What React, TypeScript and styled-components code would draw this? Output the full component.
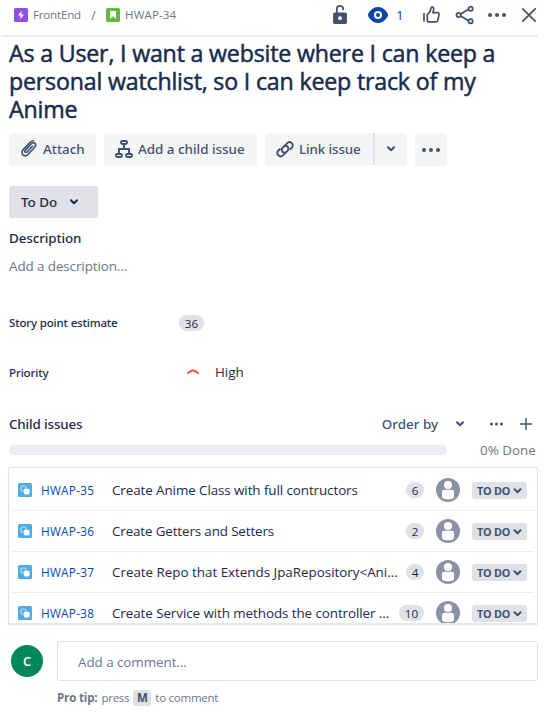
import React from 'react';
import styled, { createGlobalStyle } from 'styled-components';

const Global = createGlobalStyle`
  * { box-sizing: border-box; }
  body { margin: 0; background: #fff; }
`;

const ink = '#172b4d';
const slate = '#42526e';
const muted = '#6b778c';
const line = '#dfe1e6';

/* One run of text: size, colour, tracking and weight vary by use. */
const Text = styled.span<{ $size?: number; $color?: string; $track?: number; $shift?: number }>`
  display: block;
  white-space: pre;
  font-size: ${p => p.$size ?? 13.4}px;
  line-height: 20px;
  color: ${p => p.$color ?? ink};
  letter-spacing: ${p => p.$track ?? 0}px;
  transform: translateY(${p => p.$shift ?? 0}px);
`;

const Label = styled(Text)`
  font-family: 'Noto Sans', sans-serif;
  font-weight: 500;
`;

const Panel = styled.main`
  width: 538px;
  height: 713px;
  font-family: 'Open Sans', 'Noto Sans', sans-serif;
  display: flex;
  flex-direction: column;
  overflow: hidden;
`;

const TopBar = styled.header`
  height: 37px;
  flex: none;
  margin-left: 1px;
  padding: 0 2px 6px 13px;
  border-bottom: 2px solid #ebecf0;
  display: flex;
  align-items: center;
  justify-content: space-between;
`;

const Crumbs = styled.nav`
  display: flex;
  align-items: center;
  padding-top: 1px;
`;

const Crumb = styled.div`
  display: flex;
  align-items: center;
  gap: 5px;
`;

const Slash = styled.span`
  width: 25px;
  text-align: center;
  font-size: 13px;
  line-height: 20px;
  color: ${muted};
`;

const TopActions = styled.div`
  display: flex;
  align-items: center;
  height: 30px;
  svg { display: block; }
`;

const Watch = styled.div`
  display: flex;
  align-items: center;
  gap: 8px;
  width: 36px;
  margin: 0 19px 0 21px;
`;

const Share = styled.div`
  margin: 0 13px 0 15px;
`;

const Close = styled.div`
  margin-left: 16px;
`;

const Title = styled.h1`
  margin: 2px 0 0 9px;
  height: 84px;
  font-size: 23.2px;
  font-weight: 400;
  line-height: 28px;
  letter-spacing: -0.19px;
  color: ${ink};
  white-space: pre;
  -webkit-text-stroke: 0.5px currentColor;
`;

const ButtonRow = styled.div`
  display: flex;
  gap: 8px;
  margin: 10px 0 0 9px;
  height: 33px;
`;

const Button = styled.button<{ $width: number }>`
  width: ${p => p.$width}px;
  height: 32px;
  border: 0;
  border-radius: 3px;
  background: #f4f5f7;
  padding: 0 0 0 11px;
  display: flex;
  align-items: center;
  gap: 5px;
  font-family: inherit;
  svg { flex: none; }
`;

const Split = styled.div`
  display: flex;
`;

const LinkButton = styled(Button)`
  border-radius: 3px 0 0 3px;
`;

const DropButton = styled(Button)`
  border-left: 2px solid ${line};
  border-radius: 0 3px 3px 0;
  padding: 0;
  justify-content: center;
`;

const MoreButton = styled(Button)`
  height: 33px;
  padding: 0;
  justify-content: center;
`;

const StatusButton = styled.button`
  width: 89px;
  height: 32px;
  flex: none;
  margin: 20px 0 0 9px;
  border: 0;
  border-radius: 3px;
  background: ${line};
  padding: 0 20px 0 12px;
  display: flex;
  align-items: center;
  justify-content: space-between;
  font-family: inherit;
`;

const Description = styled.section`
  margin: 10px 0 0 9px;
  display: flex;
  flex-direction: column;
  gap: 8px;
`;

const Field = styled.div<{ $top: number }>`
  margin: ${p => p.$top}px 0 0 9px;
  height: 20px;
  display: grid;
  grid-template-columns: 170px 1fr;
  align-items: center;
`;

const PriorityValue = styled.div`
  display: flex;
  align-items: center;
  gap: 16px;
  padding-left: 8px;
`;

const Count = styled.span<{ $width: number }>`
  width: ${p => p.$width}px;
  height: 16px;
  flex: none;
  border-radius: 8px;
  background: ${line};
  color: ${ink};
  font-size: 11.6px;
  line-height: 17px;
  text-align: center;
`;

const ChildHeader = styled.div`
  margin: 32px 6px 0 9px;
  height: 20px;
  display: flex;
  align-items: center;
  justify-content: space-between;
`;

const ChildActions = styled.div`
  display: flex;
  align-items: center;
`;

const OrderBy = styled.div`
  display: flex;
  align-items: center;
  gap: 18px;
  margin-right: 26px;
`;

const Add = styled.div`
  margin-left: 17px;
  display: flex;
`;

const Progress = styled.div`
  margin: 6px 0 0 9px;
  height: 20px;
  display: flex;
  align-items: center;
  gap: 33px;
`;

const Track = styled.div`
  width: 438px;
  height: 10px;
  border-radius: 5px;
  background: #ebecf0;
`;

const IssueList = styled.div`
  margin: 7px 0 0 8px;
  height: 158px;
  flex: none;
  overflow: hidden;
  border: 1px solid ${line};
  border-bottom: 2px solid #e6e8ec;
  border-radius: 3px 3px 0 0;
  box-shadow: 0 0 1px #dfe1e6;
  padding: 2px 3px 0;
`;

const Issue = styled.div`
  height: 41px;
  border-bottom: 1px solid #ebecf0;
  padding: 0 7px 0 6px;
  display: grid;
  grid-template-columns: 23px 71px 1fr auto 24px 67px;
  align-items: center;
  svg { display: block; }
`;

const CountCell = styled.div`
  padding-right: 12px;
  display: flex;
`;

const Lozenge = styled.div`
  margin-left: 12px;
  width: 55px;
  height: 17px;
  border-radius: 3px;
  background: ${line};
  padding: 0 5px;
  display: flex;
  align-items: center;
  justify-content: space-between;
  font-size: 10.8px;
  font-weight: 700;
  line-height: 17px;
  letter-spacing: -0.2px;
  color: ${slate};
  white-space: nowrap;
  svg { margin-top: 2px; }
`;

const CommentBar = styled.section`
  margin: 16px 0 0 11px;
  display: grid;
  grid-template-columns: 46px 1fr;
`;

const UserBadge = styled.div`
  margin-top: 4px;
  width: 32px;
  height: 32px;
  border-radius: 50%;
  background: #00875a;
  color: #fff;
  font-size: 13px;
  font-weight: 600;
  line-height: 32px;
  text-align: center;
`;

const CommentBox = styled.div`
  height: 40px;
  border: 1px solid ${line};
  border-radius: 3px;
  padding: 10px 20px;
`;

const Tip = styled.div`
  grid-column: 2;
  margin-top: 7px;
  height: 20px;
  display: flex;
  align-items: center;
  gap: 4px;
  color: ${muted};
  font-size: 11.5px;
  line-height: 20px;
  letter-spacing: -0.25px;
  white-space: nowrap;
  b { letter-spacing: -0.15px; }
`;

const Key = styled.kbd`
  width: 18px;
  height: 16px;
  border-radius: 3px;
  background: ${line};
  color: ${slate};
  font: 700 11.5px/16px 'Open Sans', sans-serif;
  text-align: center;
`;

const Chevron = ({ color = slate, width = 8 }: { color?: string; width?: number }) => (
  <svg width={width} height="6" viewBox="0 0 8 6" fill="none">
    <path d="M1 1.2 4 4.2 7 1.2" stroke={color} strokeWidth="2" strokeLinecap="round" strokeLinejoin="round" />
  </svg>
);

const Dots = ({ width, r }: { width: number; r: number }) => (
  <svg width={width} height="6" viewBox={`0 0 ${width} 6`} fill={slate}>
    <circle cx={r} cy="3" r={r} />
    <circle cx={width / 2} cy="3" r={r} />
    <circle cx={width - r} cy="3" r={r} />
  </svg>
);

const EpicIcon = () => (
  <svg width="14" height="14" viewBox="0 0 14 14">
    <rect width="14" height="14" rx="1.6" fill="#904ee2" />
    <path d="M7.6 2.8 4 7.5h2.6l-.3 3.8L10 6.5H7.4z" fill="#fff" />
  </svg>
);

const StoryIcon = () => (
  <svg width="14" height="14" viewBox="0 0 14 14">
    <rect width="14" height="14" rx="1.6" fill="#63ba3c" />
    <path d="M4 3.7c0-.4.3-.7.7-.7h4.6c.4 0 .7.3.7.7v7.2L7 8.2l-3 2.7z" fill="#fff" />
  </svg>
);

const SubtaskIcon = () => (
  <svg width="14" height="14" viewBox="0 0 14 14">
    <rect width="14" height="14" rx="1.6" fill="#4bade8" />
    <rect x="3" y="3" width="5" height="5" rx="1.6" fill="none" stroke="#b5def6" strokeWidth="1.2" />
    <rect x="5.8" y="5.8" width="5.8" height="5.6" rx="1.4" fill="#fff" />
  </svg>
);

const LockIcon = () => (
  <svg width="14" height="20" viewBox="0 0 14 20">
    <path d="M3.8 9V4.3a3.2 3.2 0 0 1 6.4-.3v1" fill="none" stroke={slate} strokeWidth="1.8" />
    <rect y="7.5" width="14" height="11.5" rx="1.8" fill={slate} />
    <circle cx="7" cy="13.2" r="1.9" fill="#fff" />
  </svg>
);

const EyeIcon = () => (
  <svg width="20" height="16" viewBox="0 0 20 16">
    <path d="M10 0C4.5 0 .9 5 .1 7.3a2 2 0 0 0 0 1.4C.9 11 4.5 16 10 16s9.1-5 9.9-7.3a2 2 0 0 0 0-1.4C19.1 5 15.5 0 10 0z" fill="#0747a6" />
    <circle cx="10" cy="8" r="3" fill="none" stroke="#fff" strokeWidth="2" />
  </svg>
);

const ThumbIcon = () => (
  <svg width="17" height="17" viewBox="0 0 17 17" fill="none" stroke={slate} strokeWidth="1.7" strokeLinecap="round" strokeLinejoin="round">
    <path d="M1 7.7v7.3" />
    <path d="M4.3 14.7V8.2c1.800-.8 3.100-2.800 3.500-5l.2-1.200c.2-1.200 2.400-1.200 2.600.5.200 1.300-.2 2.800-.7 4.100h4.300c1.300 0 2.100 1 1.800 2.200l-1.100 5.400c-.2 1-.8 1.600-1.900 1.600H5.200c-.6 0-.9-.4-.9-1.100z" />
  </svg>
);

const ShareIcon = () => (
  <svg width="20" height="20" viewBox="0 0 20 20" fill="none" stroke={slate} strokeWidth="1.8">
    <path d="m5.700 8.900 7.400-4.400M5.700 11.100l7.400 4.400" />
    <circle cx="3.600" cy="10" r="2.100" />
    <circle cx="15.600" cy="3.800" r="2.100" />
    <circle cx="15.600" cy="16.200" r="2.100" />
  </svg>
);

const CloseIcon = () => (
  <svg width="14" height="14" viewBox="0 0 14 14">
    <path d="M.8.8l12.400 12.400M13.200.8.8 13.200" stroke={slate} strokeWidth="1.7" strokeLinecap="round" />
  </svg>
);

const ClipIcon = () => (
  <svg width="18" height="20" viewBox="0 0 18 20" fill="none" stroke={slate} strokeWidth="1.6" strokeLinecap="round">
    <path d="m12.600 7-5.500 5.900c-.7.700-1.500.7-2 .2s-.5-1.300.2-2l5.900-6.200c1.300-1.400 2.800-1.400 3.800-.5s1 2.500-.3 3.900l-6.500 6.900c-1.700 1.800-3.800 1.900-5.200.6s-1.400-3.500.4-5.400l6.700-7.100c.9-1 2-1.600 3.200-1.600" />
  </svg>
);

const TreeIcon = () => (
  <svg width="18" height="20" viewBox="0 0 18 20" fill="none" stroke={slate} strokeWidth="1.9">
    <rect x="6" y="2" width="6" height="3" rx="1.2" />
    <rect x="1" y="15" width="6" height="3" rx="1.2" />
    <rect x="11" y="15" width="6" height="3" rx="1.2" />
    <path d="M9 5.500V10M4 14.500V10h10v4.500" />
  </svg>
);

const LinkIcon = () => (
  <svg width="18" height="20" viewBox="0 0 18 20" fill="none" stroke={slate} strokeWidth="1.9" strokeLinecap="round">
    <path d="M10 13.300c-1.600.8-3 .3-3.700-.8-.9-1.200-.7-2.700.4-3.800L11 4.300c1.500-1.500 3.500-1.400 4.800-.2s1.300 3.300-.1 4.800l-1.400 1.300" />
    <path d="M8.200 7.200c1.500-.8 3-.3 3.700.8.800 1.200.6 2.700-.4 3.800l-4.300 4.300c-1.500 1.500-3.600 1.400-4.900.2s-1.300-3.300.1-4.800l1.400-1.300" />
  </svg>
);

const HighIcon = () => (
  <svg width="12" height="8" viewBox="0 0 12 8" fill="none">
    <path d="M1 5C3 3.500 4.700 2.700 6 2.300 7.300 2.700 9 3.500 11 5" stroke="#ff5630" strokeWidth="2" strokeLinecap="round" strokeLinejoin="round" />
  </svg>
);

const PlusIcon = () => (
  <svg width="12" height="12" viewBox="0 0 12 12">
    <path d="M6 0v12M0 6h12" stroke={slate} strokeWidth="1.4" />
  </svg>
);

const PersonIcon = () => (
  <svg width="24" height="24" viewBox="0 0 24 24">
    <circle cx="12" cy="12" r="12" fill="#8993a4" />
    <circle cx="12" cy="7" r="4" fill="#fff" />
    <path d="M6 14c0-1.400.9-2.300 2.300-2.300h7.400c1.400 0 2.300.9 2.300 2.300v4.700c0 1.700-2.700 2.500-6 2.500s-6-.8-6-2.500z" fill="#fff" />
  </svg>
);

const issues = [
  { key: 'HWAP-35', title: 'Create Anime Class with full contructors', points: 6, track: -0.08 },
  { key: 'HWAP-36', title: 'Create Getters and Setters', points: 2, track: -0.13 },
  { key: 'HWAP-37', title: 'Create Repo that Extends JpaRepository<Ani...', points: 4, track: -0.01 },
  { key: 'HWAP-38', title: 'Create Service with methods the controller ...', points: 10, track: -0.07 },
];

export default function App() {
  return (
    <Panel>
      <Global />
      <TopBar>
        <Crumbs>
          <Crumb>
            <EpicIcon />
            <Text $size={11.6} $color={muted} $track={-0.2}>FrontEnd</Text>
          </Crumb>
          <Slash>/</Slash>
          <Crumb>
            <StoryIcon />
            <Text $size={11.6} $color={muted} $track={0.1}>HWAP-34</Text>
          </Crumb>
        </Crumbs>
        <TopActions>
          <LockIcon />
          <Watch>
            <EyeIcon />
            <Text $color="#0747a6">1</Text>
          </Watch>
          <ThumbIcon />
          <Share><ShareIcon /></Share>
          <Dots width={18} r={2} />
          <Close><CloseIcon /></Close>
        </TopActions>
      </TopBar>

      <Title>{'As a User, I want a website where I can keep a\npersonal watchlist, so I can keep track of my\nAnime'}</Title>

      <ButtonRow>
        <Button $width={87}>
          <ClipIcon />
          <Label $color={slate}>Attach</Label>
        </Button>
        <Button $width={153}>
          <TreeIcon />
          <Label $color={slate}>Add a child issue</Label>
        </Button>
        <Split>
          <LinkButton $width={108}>
            <LinkIcon />
            <Label $color={slate} $track={-0.12}>Link issue</Label>
          </LinkButton>
          <DropButton $width={34}><Chevron /></DropButton>
        </Split>
        <MoreButton $width={32}><Dots width={18} r={2} /></MoreButton>
      </ButtonRow>

      <StatusButton>
        <Label>To Do</Label>
        <Chevron color={ink} />
      </StatusButton>

      <Description>
        <Label $track={-0.1}>Description</Label>
        <Text $color={muted} $track={-0.08}>Add a description...</Text>
      </Description>

      <Field $top={37}>
        <Label $size={11.5} $track={-0.16}>Story point estimate</Label>
        <Count $width={25}>36</Count>
      </Field>
      <Field $top={29}>
        <Label $size={11.5} $track={-0.12} $shift={1}>Priority</Label>
        <PriorityValue>
          <HighIcon />
          <Text>High</Text>
        </PriorityValue>
      </Field>

      <ChildHeader>
        <Label $track={-0.14}>Child issues</Label>
        <ChildActions>
          <OrderBy>
            <Label $color={slate}>Order by</Label>
            <Chevron />
          </OrderBy>
          <Dots width={13} r={1.5} />
          <Add><PlusIcon /></Add>
        </ChildActions>
      </ChildHeader>

      <Progress>
        <Track />
        <Text $color={muted}>0% Done</Text>
      </Progress>

      <IssueList>
        {issues.map(issue => (
          <Issue key={issue.key}>
            <SubtaskIcon />
            <Text $size={11.8} $color="#0049b8" $track={0.25}>{issue.key}</Text>
            <Text $track={issue.track}>{issue.title}</Text>
            <CountCell>
              <Count $width={issue.points > 9 ? 25 : 18}>{issue.points}</Count>
            </CountCell>
            <PersonIcon />
            <Lozenge>
              TO DO
              <Chevron width={9} />
            </Lozenge>
          </Issue>
        ))}
      </IssueList>

      <CommentBar>
        <UserBadge>C</UserBadge>
        <CommentBox>
          <Text $color={muted} $track={-0.05}>Add a comment...</Text>
        </CommentBox>
        <Tip>
          <b>Pro tip:</b>
          <span>press</span>
          <Key>M</Key>
          <span>to comment</span>
        </Tip>
      </CommentBar>
    </Panel>
  );
}
